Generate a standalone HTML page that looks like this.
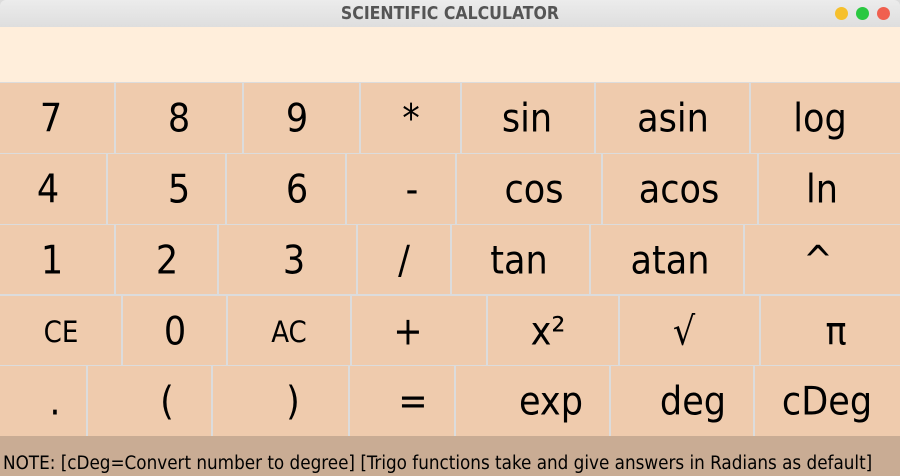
<!DOCTYPE html>
<html><head><meta charset="utf-8"><style>
*{margin:0;padding:0;box-sizing:border-box}
html,body{width:900px;height:476px;overflow:hidden}
body{background:#dcdcdc;font-family:"DejaVu Sans Condensed","DejaVu Sans","Liberation Sans",sans-serif;position:relative}
#title{position:absolute;left:0;top:0;width:900px;height:27px;background:linear-gradient(#ececec,#dedede);text-align:center;font:bold 17.5px "DejaVu Sans Condensed","DejaVu Sans",sans-serif;color:#555;line-height:28px;border-radius:6px 6px 0 0}
.dot{position:absolute;top:7px;width:13px;height:13px;border-radius:50%}
#disp{position:absolute;left:0;top:27px;width:900px;height:55px;background:#ffeedb}
.b{position:absolute;background:#efcbad}
.t{position:absolute;transform:translate(-50%,-50%);font-size:39px;color:#000;white-space:nowrap}
.s{font-size:29px}
#foot{position:absolute;left:0;top:436px;width:900px;height:40px;background:#c9ac94;font-size:18.7px;line-height:56px;padding-left:3px;white-space:nowrap;color:#000}
</style></head><body>
<div id="title">SCIENTIFIC CALCULATOR</div>
<div class="dot" style="left:835px;background:#f6c02c"></div>
<div class="dot" style="left:856px;background:#2ac840"></div>
<div class="dot" style="left:877px;background:#f0604f"></div>
<div id="disp"></div>
<div id="pad"></div>
<div id="foot">NOTE: [cDeg=Convert number to degree] [Trigo functions take and give answers in Radians as default]</div>
<script>
var rows=[
 [83,153,[0,116,244,361,462,596,751,900],[["7",51],["8",179],["9",297],["*",411],["sin",527],["asin",673],["log",820]]],
 [154,224,[0,108,227,347,457,603,759,900],[["4",48],["5",179],["6",297],["-",412],["cos",534],["acos",679],["ln",822]]],
 [225,294,[0,116,219,358,452,591,745,900],[["1",52],["2",167],["3",294],["/",404],["tan",519],["atan",670],["^",818]]],
 [296,365,[0,123,228,352,488,620,761,900],[["CE",61,1],["0",175],["AC",289,1],["+",408],["x²",548],["√",684],["π",836]]],
 [366,436,[0,88,213,350,456,611,755,900],[[".",55],["(",167],[")",293],["=",413],["exp",551],["deg",693],["cDeg",827]]]
];
var h="";
rows.forEach(function(r){
 var y0=r[0],y1=r[1],xs=r[2];
 for(var i=0;i<7;i++){
  h+='<div class="b" style="left:'+xs[i]+'px;top:'+y0+'px;width:'+(xs[i+1]-xs[i]-(i<6?2:0))+'px;height:'+(y1-y0)+'px"></div>';
  var l=r[3][i];
  h+='<div class="t'+(l[2]?' s':'')+'" style="left:'+l[1]+'px;top:'+((y0+y1)/2+1)+'px">'+l[0]+'</div>';
 }
});
document.getElementById("pad").innerHTML=h;
</script>
</body></html>
